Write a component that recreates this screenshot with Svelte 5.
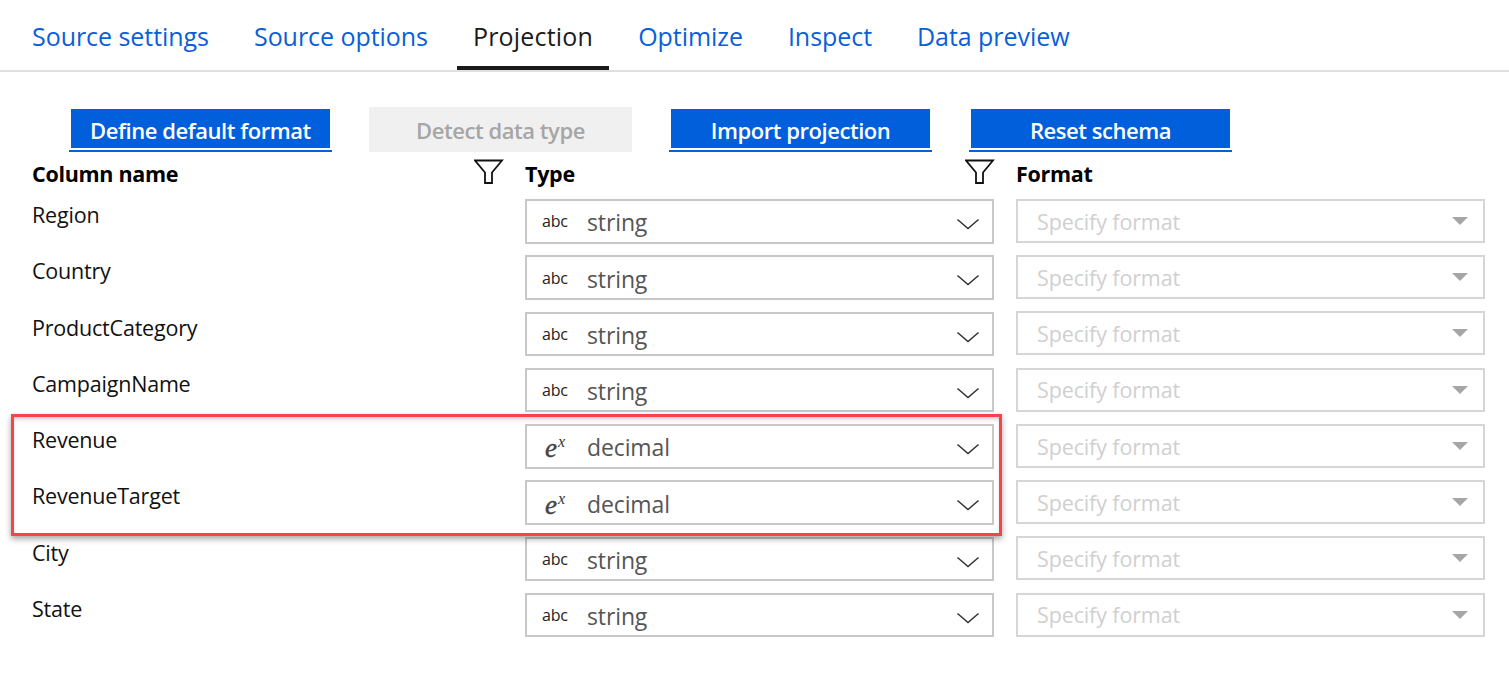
<script>
  const tabs = ["Source settings", "Source options", "Projection", "Optimize", "Inspect", "Data preview"];
  const buttons = [
    { label: "Define default format" },
    { label: "Detect data type", disabled: true },
    { label: "Import projection" },
    { label: "Reset schema" }
  ];
  const columns = [
    { name: "Region", type: "string" },
    { name: "Country", type: "string" },
    { name: "ProductCategory", type: "string" },
    { name: "CampaignName", type: "string" },
    { name: "Revenue", type: "decimal" },
    { name: "RevenueTarget", type: "decimal" },
    { name: "City", type: "string" },
    { name: "State", type: "string" }
  ];
</script>

{#snippet funnel()}
  <svg class="funnel" width="30" height="26" viewBox="0 0 30 26">
    <path d="M1 1.5 H28 L18 13.5 V24 H11 V13.5 Z" fill="none" stroke="#111" stroke-width="1.8" />
  </svg>
{/snippet}

<div class="page">
  <nav class="tabs">
    {#each tabs as tab}
      <div class="tab" class:active={tab === "Projection"}>{tab}</div>
    {/each}
  </nav>

  <div class="toolbar">
    {#each buttons as b}
      <div class="btn" class:disabled={b.disabled}><span>{b.label}</span></div>
    {/each}
  </div>

  <div class="head">
    <div>Column name {@render funnel()}</div>
    <div>Type {@render funnel()}</div>
    <div>Format</div>
  </div>

  {#each columns as col}
    <div class="row">
      <div class="name">{col.name}</div>
      <div class="select">
        {#if col.type === "string"}
          <span class="ico abc">abc</span>
        {:else}
          <span class="ico ex">e<sup>x</sup></span>
        {/if}
        <span class="val">{col.type}</span>
        <svg class="chev" width="24" height="12" viewBox="0 0 24 12">
          <path d="M1.5 1.5 L12 10.5 L22.5 1.5" fill="none" stroke="#333" stroke-width="1.5" />
        </svg>
      </div>
      <div class="format">
        <span>Specify format</span>
        <i class="caret"></i>
      </div>
    </div>
  {/each}

  <div class="highlight"></div>
</div>

<style>
  :global(body) {
    margin: 0;
    background: #fff;
  }
  .page {
    position: relative;
    width: 1509px;
    height: 673px;
    overflow: hidden;
    font-family: "Open Sans", "Noto Sans", sans-serif;
    color: #111;
  }
  .tabs {
    display: flex;
    gap: 14px;
    height: 70px;
    padding-left: 16.5px;
    border-bottom: 2px solid #e0e0e0;
    box-sizing: content-box;
  }
  .tab {
    padding: 0 15.5px;
    font-size: 25px;
    line-height: 72px;
    letter-spacing: -0.05px;
    color: #0a5fd8;
    height: 70px;
    box-sizing: border-box;
    white-space: nowrap;
  }
  .tab.active {
    color: #1a1a1a;
    letter-spacing: 0.2px;
    border-bottom: 4px solid #1a1a1a;
  }
  .toolbar {
    display: flex;
    gap: 37px;
    padding: 35px 0 0 69px;
    height: 45px;
  }
  .btn {
    width: 263px;
    height: 45px;
    box-sizing: border-box;
    border-bottom: 2px solid #0a5fd8;
    padding: 2px;
    color: #fff;
    font-size: 22px;
    font-weight: 600;
    letter-spacing: -0.45px;
    text-align: center;
  }
  .btn span {
    display: block;
    height: 39px;
    line-height: 42px;
    background: #025fdc;
  }
  .btn.disabled {
    border: 0;
    padding: 0;
    background: #f0f0f0;
    color: #a6a6a6;
  }
  .btn.disabled span {
    background: none;
    height: 45px;
    line-height: 46px;
  }
  .head {
    display: grid;
    grid-template-columns: 493px 491px 1fr;
    height: 47px;
    padding-left: 32px;
    font-size: 21.5px;
    font-weight: 700;
    letter-spacing: -0.3px;
    color: #000;
    box-sizing: border-box;
  }
  .head > div {
    position: relative;
    line-height: 44px;
  }
  .funnel {
    position: absolute;
    top: 7px;
    right: 21px;
  }
  .row {
    display: grid;
    grid-template-columns: 470px 469px 469px;
    column-gap: 23px;
    height: 56.25px;
    padding-left: 32px;
  }
  .name {
    font-size: 21.5px;
    letter-spacing: -0.2px;
    line-height: 32px;
    color: #111;
  }
  .select {
    height: 44.5px;
    box-sizing: border-box;
    border: 2px solid #c8c8c8;
    display: flex;
    align-items: center;
    position: relative;
    background: #fff;
  }
  .ico {
    width: 60px;
    flex: none;
    box-sizing: border-box;
    padding-left: 15px;
    color: #444;
  }
  .abc {
    font-size: 16px;
    letter-spacing: -0.2px;
    font-weight: 500;
    color: #222;
  }
  .ex {
    font-family: "Liberation Serif", serif;
    font-style: italic;
    font-size: 27px;
    padding-left: 18px;
    line-height: 26px;
    margin-top: 4px;
    color: #444;
    -webkit-text-stroke: 0.4px #444;
  }
  .ex sup {
    font-size: 16px;
    line-height: 0;
    vertical-align: 10px;
    margin-left: 1px;
    -webkit-text-stroke: 0;
    color: #333;
  }
  .val {
    font-size: 23px;
    letter-spacing: -0.12px;
    color: #555;
    line-height: 44px;
    margin-top: 2px;
  }
  .chev {
    position: absolute;
    right: 12px;
    top: 17px;
  }
  .format {
    width: 469px;
    height: 44px;
    margin: -0.2px 0 0 -1px;
    box-sizing: border-box;
    border: 2px solid #d6d6d6;
    display: flex;
    align-items: center;
    justify-content: space-between;
    padding: 0 15px 0 19px;
    color: #d0d0d0;
    font-size: 21.5px;
    letter-spacing: -0.13px;
    line-height: 30px;
  }
  .format span {
    margin-top: 1.8px;
  }
  .caret {
    width: 0;
    height: 0;
    border-left: 8px solid transparent;
    border-right: 8px solid transparent;
    border-top: 8px solid #a6a6a6;
  }
  .highlight {
    position: absolute;
    left: 11px;
    top: 414px;
    width: 991px;
    height: 122px;
    box-sizing: border-box;
    border: 3px solid #f5454a;
    box-shadow: 0 3px 6px rgba(0, 0, 0, 0.35), inset 0 3px 5px -2px rgba(0, 0, 0, 0.3);
  }
</style>
